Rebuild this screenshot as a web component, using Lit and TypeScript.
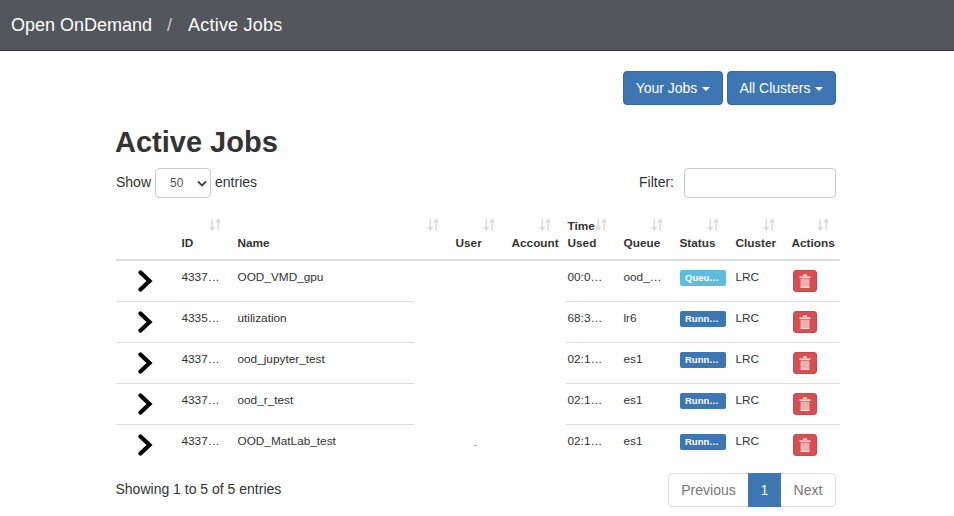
import { LitElement, html, css, svg } from "lit";
import { customElement } from "lit/decorators.js";

const jobs = [
  { id: "4337…", name: "OOD_VMD_gpu", time: "00:0…", queue: "ood_…", status: "Queu…", kind: "info" },
  { id: "4335…", name: "utilization", time: "68:3…", queue: "lr6", status: "Runn…", kind: "primary" },
  { id: "4337…", name: "ood_jupyter_test", time: "02:1…", queue: "es1", status: "Runn…", kind: "primary" },
  { id: "4337…", name: "ood_r_test", time: "02:1…", queue: "es1", status: "Runn…", kind: "primary" },
  { id: "4337…", name: "OOD_MatLab_test", time: "02:1…", queue: "es1", status: "Runn…", kind: "primary" },
];

const sortIcon = svg`<path d="M3 1v8.5M1 7.5l2 2.8 2-2.8M8.5 11V1.5M6.5 4l2-2.8 2 2.8" fill="none" stroke="#dcdcdc" stroke-width="1.4"/>`;
const chevron = svg`<path d="M2.5 2.5 11.5 11 2.5 19.5" fill="none" stroke="#000" stroke-width="4.2" stroke-linecap="round" stroke-linejoin="miter"/>`;
const trash = svg`
  <path d="M5 1.2h4M1.5 3.2h11" stroke="#fff" stroke-width="1.3" fill="none"/>
  <path d="M2.5 4.6h9v8.6h-9z" fill="#fff" fill-opacity=".55"/>
  <path d="M2.5 13.4h9" stroke="#fff" stroke-width=".9"/>`;

@customElement("app-root")
export class AppRoot extends LitElement {
  static styles = css`
    :host {
      display: block;
      height: 516px;
      overflow: hidden;
      background: #fff;
      color: #333;
      font-family: "Liberation Sans", Arial, sans-serif;
      font-size: 14px;
    }
    .navbar {
      height: 50px;
      box-sizing: content-box;
      border-bottom: 1px solid #33363a;
      background: #53565b;
      color: #fff;
      font-size: 18px;
      display: flex;
      align-items: center;
      padding-left: 11px;
    }
    .navbar .sep {
      color: #c9cacc;
      margin: 0 15px 0 15px;
      width: 6px;
    }
    .navbar .page { letter-spacing: 0.2px; }
    .content {
      width: 720px;
      margin-left: 116px;
      position: relative;
    }
    .actions {
      display: flex;
      justify-content: flex-end;
      gap: 4px;
      padding-top: 20px;
    }
    .btn {
      height: 34px;
      box-sizing: border-box;
      border: 1px solid #35689f;
      border-radius: 4px;
      background: #3d76b3;
      color: #fff;
      display: flex;
      align-items: center;
      justify-content: center;
      gap: 5px;
    }
    .btn.jobs { width: 100px; }
    .btn.clusters { width: 109px; }
    .caret {
      border-left: 4px solid transparent;
      border-right: 4px solid transparent;
      border-top: 4px solid #fff;
      margin-top: 1px;
    }
    h1 {
      margin: 19px 0 0 -1px;
      font-size: 29px;
      line-height: 36px;
      font-weight: 700;
    }
    .controls {
      display: flex;
      align-items: center;
      justify-content: space-between;
      margin-top: 8px;
      height: 30px;
    }
    .length, .filter {
      display: flex;
      align-items: center;
    }
    .length span, .filter span { margin-bottom: 2px; }
    .select-wrap {
      position: relative;
      margin: 0 4px;
      width: 56px;
      height: 30px;
    }
    select {
      appearance: none;
      width: 100%;
      height: 100%;
      border: 1px solid #ccc;
      border-radius: 4px;
      background: #fff;
      color: #555;
      font: 12px "Liberation Sans", Arial, sans-serif;
      padding-left: 14px;
    }
    .select-wrap svg {
      position: absolute;
      right: 4px;
      top: 12px;
      pointer-events: none;
    }
    .filter input {
      width: 152px;
      height: 30px;
      box-sizing: border-box;
      margin-left: 10px;
      border: 1px solid #ccc;
      border-radius: 4px;
      background: #fff;
    }
    .table {
      width: 724px;
      margin-top: 16px;
      position: relative;
      font-size: 11.8px;
    }
    .row {
      display: grid;
      grid-template-columns: 60px 56px 218px 56px 56px 56px 56px 56px 56px 54px;
    }
    .head {
      height: 45px;
      border-bottom: 2px solid #ddd;
      font-weight: 700;
      font-size: 11.8px;
    }
    .th {
      position: relative;
      padding: 0 0 7px 5.5px;
      display: flex;
      flex-direction: column;
      justify-content: flex-end;
      line-height: 17px;
      white-space: nowrap;
    }
    .th svg {
      position: absolute;
      top: 4px;
      right: 10px;
    }
    .body {
      height: 41px;
      box-sizing: border-box;
      border-top: 1px solid #ddd;
    }
    .head + .body {
      height: 40px;
      border-top: 0;
    }
    .td {
      padding: 9px 0 0 5.5px;
      line-height: 14px;
      white-space: nowrap;
    }
    .toggle {
      padding: 9px 0 0 22px;
    }
    .badge {
      display: block;
      width: 46px;
      height: 16px;
      margin-left: 0.5px;
      box-sizing: border-box;
      border-radius: 2px;
      padding-left: 5px;
      color: #fff;
      font-size: 9.5px;
      font-weight: 700;
      line-height: 16px;
    }
    .badge.info { background: #5fbcdd; }
    .badge.primary { background: #3d76b3; }
    .trash {
      width: 24px;
      height: 22px;
      margin-left: 1.5px;
      border-radius: 3px;
      background: #d55052;
      border: 1px solid #c9484b;
      box-sizing: border-box;
      display: flex;
      align-items: center;
      justify-content: center;
    }
    /* blanked-out part of the table */
    .mask {
      position: absolute;
      left: 298px;
      width: 152px;
      top: 47px;
      bottom: 0;
      background: #fff;
    }
    .mask i {
      position: absolute;
      left: 60px;
      top: 184px;
      width: 3px;
      height: 1px;
      background: #aaa;
    }
    .footer {
      display: flex;
      align-items: center;
      justify-content: space-between;
      margin-top: 8px;
      height: 34px;
    }
    .footer .info { margin-bottom: 2px; margin-left: -0.5px; }
    .pager {
      display: flex;
      height: 34px;
      box-sizing: border-box;
      border: 1px solid #ddd;
      border-radius: 4px;
      color: #777;
      line-height: 32px;
      text-align: center;
    }
    .pager span { display: block; }
    .pager .prev { width: 79px; }
    .pager .cur {
      width: 33px;
      margin: -1px 0;
      line-height: 34px;
      background: #3d76b3;
      color: #fff;
    }
    .pager .next { width: 54px; }
  `;

  private th(label: string, second = "") {
    return html`<div class="th">
      ${second ? html`<span>${second}</span>` : ""}<span>${label}</span>
      <svg width="13" height="14" viewBox="0 0 12 12" preserveAspectRatio="none">${sortIcon}</svg>
    </div>`;
  }

  render() {
    return html`
      <div class="navbar">
        <span>Open OnDemand</span><span class="sep">/</span><span class="page">Active Jobs</span>
      </div>
      <div class="content">
        <div class="actions">
          <div class="btn jobs">Your Jobs <span class="caret"></span></div>
          <div class="btn clusters">All Clusters <span class="caret"></span></div>
        </div>
        <h1>Active Jobs</h1>
        <div class="controls">
          <div class="length">
            <span>Show</span>
            <div class="select-wrap">
              <select><option>50</option></select>
              <svg width="10" height="7" viewBox="0 0 10 7"><path d="M1 1.5 5 5.5 9 1.5" fill="none" stroke="#444" stroke-width="1.8"/></svg>
            </div>
            <span>entries</span>
          </div>
          <div class="filter"><span>Filter:</span> <input type="text" /></div>
        </div>
        <div class="table">
          <div class="row head">
            <div class="th"></div>
            ${this.th("ID")}
            ${this.th("Name")}
            ${this.th("User")}
            ${this.th("Account")}
            ${this.th("Used", "Time")}
            ${this.th("Queue")}
            ${this.th("Status")}
            ${this.th("Cluster")}
            ${this.th("Actions")}
          </div>
          ${jobs.map(
            (j) => html`<div class="row body">
              <div class="toggle"><svg width="15" height="22" viewBox="0 0 15 22">${chevron}</svg></div>
              <div class="td">${j.id}</div>
              <div class="td">${j.name}</div>
              <div class="td"></div>
              <div class="td"></div>
              <div class="td">${j.time}</div>
              <div class="td">${j.queue}</div>
              <div class="td"><span class="badge ${j.kind}">${j.status}</span></div>
              <div class="td">LRC</div>
              <div class="td">
                <div class="trash"><svg width="14" height="15" viewBox="0 0 14 15">${trash}</svg></div>
              </div>
            </div>`
          )}
          <div class="mask"><i></i></div>
        </div>
        <div class="footer">
          <div class="info">Showing 1 to 5 of 5 entries</div>
          <div class="pager">
            <span class="prev">Previous</span><span class="cur">1</span><span class="next">Next</span>
          </div>
        </div>
      </div>
    `;
  }
}
